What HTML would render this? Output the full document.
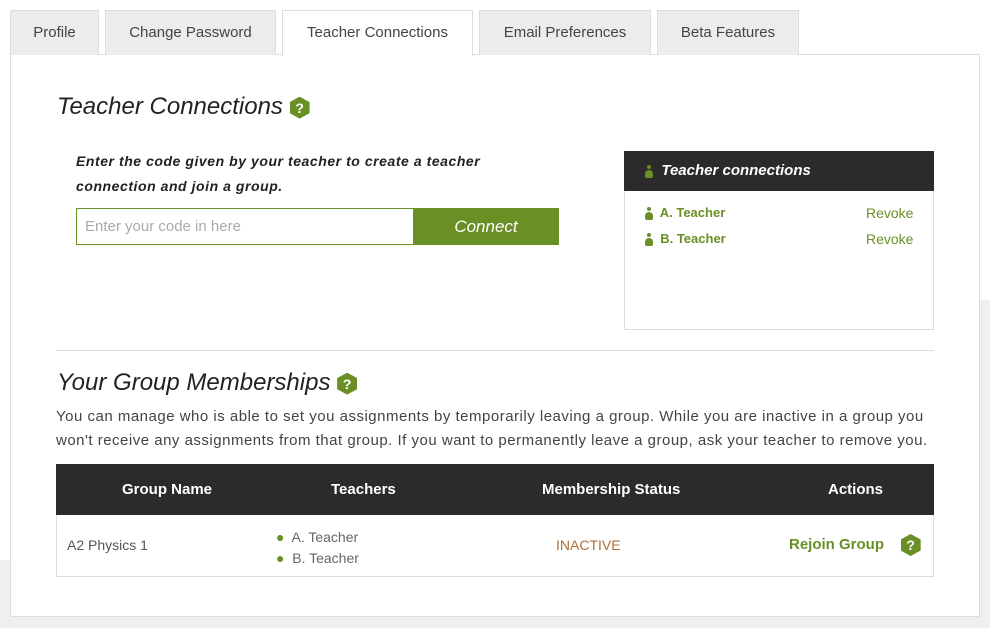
<!DOCTYPE html>
<html><head><meta charset="utf-8"><style>
*{box-sizing:border-box;margin:0;padding:0}
body{width:990px;height:628px;background:#fff;font-family:"Liberation Sans",sans-serif;position:relative;overflow:hidden;color:#333}
.bgb{position:absolute;left:0;top:560px;width:990px;height:68px;background:#efefef}
.bgr{position:absolute;left:980px;top:300px;width:10px;height:328px;background:#efefef}
.tab{position:absolute;top:10px;height:45px;background:#ececec;border:1px solid #ddd;border-bottom:none;font-size:15px;color:#444;text-align:center;line-height:44px}
.tab.a{background:#fff;height:46px;z-index:2}
.panel{position:absolute;left:10px;top:54px;width:970px;height:563px;background:#fff;border:1px solid #ddd}
.abs{position:absolute}
h2{position:absolute;font-style:italic;font-weight:normal;font-size:24px;color:#222}
.hex{display:inline-block;width:20px;height:22px;background:#6a8f25;clip-path:polygon(50% 0,100% 25%,100% 75%,50% 100%,0 75%,0 25%);color:#fff;font-weight:bold;font-size:14px;text-align:center;line-height:22px;vertical-align:middle;font-style:normal;letter-spacing:0}
.g{color:#6a8f25}
.pers{display:inline-block;width:8px;height:13px;position:relative;vertical-align:middle}
.pers:before{content:"";position:absolute;left:2px;top:0;width:4px;height:4px;border-radius:50%;background:#6a8f25}
.pers:after{content:"";position:absolute;left:0;top:5px;width:8px;height:8px;border-radius:4px 4px 2px 2px;background:#6a8f25}
</style></head><body>
<div class="bgb"></div><div class="bgr"></div>
<div class="panel"></div>
<div class="tab" style="left:10px;width:89px">Profile</div>
<div class="tab" style="left:105px;width:171px">Change Password</div>
<div class="tab a" style="left:282px;width:191px">Teacher Connections</div>
<div class="tab" style="left:479px;width:172px">Email Preferences</div>
<div class="tab" style="left:657px;width:142px">Beta Features</div>

<h2 style="left:57px;top:93px">Teacher Connections <span class="hex">?</span></h2>
<div class="abs" style="left:76px;top:149px;font-size:14px;font-style:italic;font-weight:bold;line-height:25px;color:#222;white-space:nowrap;letter-spacing:0.55px">Enter the code given by your teacher to create a teacher<br>connection and join a group.</div>
<div class="abs" style="left:76px;top:208px;width:338px;height:37px;border:1px solid #6a8f25;font-size:15px;color:#aaa;padding:9px 8px">Enter your code in here</div>
<div class="abs" style="left:413px;top:208px;width:146px;height:37px;background:#6a8f25;color:#fff;font-style:italic;font-size:17px;text-align:center;line-height:37px">Connect</div>

<div class="abs" style="left:624px;top:151px;width:310px;height:179px;border:1px solid #ddd"></div>
<div class="abs" style="left:624px;top:151px;width:310px;height:40px;background:#2b2b2b;color:#fff;font-style:italic;font-weight:bold;font-size:15px;line-height:40px;padding-left:21px"><span class="pers"></span>&nbsp; Teacher connections</div>
<div class="abs g" style="left:645px;top:205px;font-size:13px;font-weight:bold"><span class="pers"></span>&nbsp; A. Teacher</div>
<div class="abs g" style="left:645px;top:231px;font-size:13px;font-weight:bold"><span class="pers"></span>&nbsp; B. Teacher</div>
<div class="abs g" style="left:866px;top:205px;font-size:14px;line-height:17px">Revoke</div>
<div class="abs g" style="left:866px;top:231px;font-size:14px;line-height:17px">Revoke</div>

<div class="abs" style="left:56px;top:350px;width:878px;height:1px;background:#ddd"></div>
<h2 style="left:57px;top:369px">Your Group Memberships <span class="hex">?</span></h2>
<div class="abs" style="left:56px;top:405px;width:920px;font-size:15px;line-height:24px;color:#444;white-space:nowrap;letter-spacing:0.5px">You can manage who is able to set you assignments by temporarily leaving a group. While you are inactive in a group you<br>won't receive any assignments from that group. If you want to permanently leave a group, ask your teacher to remove you.</div>

<div class="abs" style="left:56px;top:464px;width:878px;height:113px;border:1px solid #ddd"></div>
<div class="abs" style="left:56px;top:464px;width:878px;height:51px;background:#2b2b2b;color:#fff;font-weight:bold;font-size:15px;line-height:51px">
<span class="abs" style="left:66px">Group Name</span>
<span class="abs" style="left:275px">Teachers</span>
<span class="abs" style="left:486px">Membership Status</span>
<span class="abs" style="left:772px">Actions</span></div>
<div class="abs" style="left:67px;top:537px;font-size:14px;color:#555">A2 Physics 1</div>
<div class="abs" style="left:276px;top:527px;font-size:14px;color:#666;line-height:21px"><span class="g">●</span>&nbsp; A. Teacher<br><span class="g">●</span>&nbsp; B. Teacher</div>
<div class="abs" style="left:556px;top:537px;font-size:14px;color:#b0703a">INACTIVE</div>
<div class="abs g" style="left:789px;top:534px;font-size:15px;font-weight:bold">Rejoin Group &nbsp;&nbsp;&nbsp;<span class="hex">?</span></div>
</body></html>
